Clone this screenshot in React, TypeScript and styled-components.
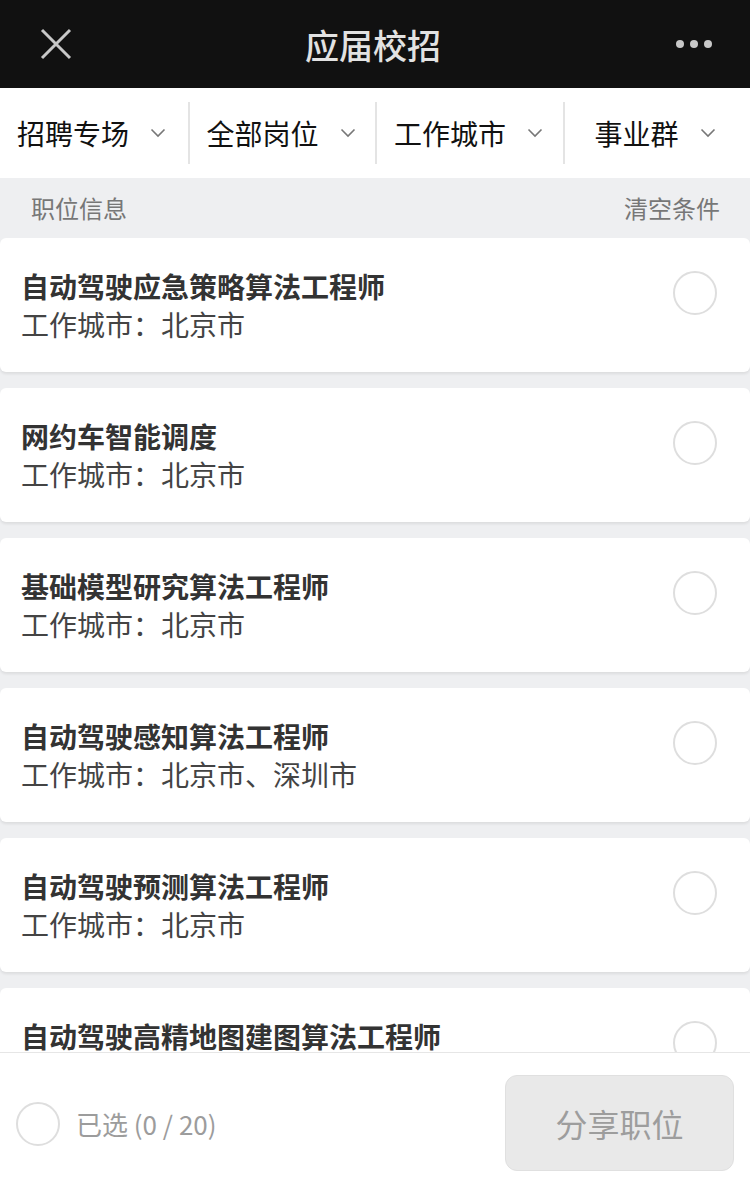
import styled, { createGlobalStyle } from "styled-components";

const GlobalStyle = createGlobalStyle`
  html, body {
    margin: 0;
    padding: 0;
    background: #eeeff1;
    font-family: "Noto Sans CJK SC", "Noto Sans", sans-serif;
  }
  * { box-sizing: border-box; }
`;

const Page = styled.div`
  height: 100vh;
  display: flex;
  flex-direction: column;
  overflow: hidden;
  background: #eeeff1;
`;

const NavBar = styled.div`
  height: 88px;
  flex-shrink: 0;
  background: #111111;
  display: flex;
  align-items: center;
  justify-content: space-between;
  padding: 0 36px 0 36px;

  .title {
    color: #e2e2e2;
    font-size: 34px;
    font-weight: 500;
    margin-right: 4px;
  }
`;

const IconBox = styled.div`
  width: 40px;
  height: 40px;
  display: flex;
  align-items: center;
  justify-content: center;
`;

const FilterBar = styled.div`
  height: 90px;
  flex-shrink: 0;
  background: #fff;
  display: grid;
  grid-template-columns: repeat(4, 1fr);
  align-items: center;
`;

const FilterItem = styled.div<{ $first?: boolean; $pad: number }>`
  height: 62px;
  display: flex;
  align-items: center;
  gap: 21px;
  padding-left: ${(p) => p.$pad}px;
  border-left: ${(p) => (p.$first ? "none" : "2px solid #e4e4e4")};
  font-size: 28px;
  color: #111;
`;

const SectionHead = styled.div`
  height: 60px;
  flex-shrink: 0;
  display: flex;
  align-items: center;
  justify-content: space-between;
  padding: 0 30px 2px 31px;
  font-size: 24px;
  color: #777;
`;

const List = styled.div`
  flex: 1;
  overflow: hidden;
  display: flex;
  flex-direction: column;
  gap: 16px;
`;

const Card = styled.div`
  flex-shrink: 0;
  background: #fff;
  border-radius: 6px;
  box-shadow: 0 2px 3px rgba(0, 0, 0, 0.08);
  padding: 29px 33px 29px 21px;
  display: flex;
  justify-content: space-between;
  align-items: flex-start;

  .name {
    font-size: 28px;
    line-height: 38px;
    font-weight: bold;
    color: #333;
  }
  .city {
    font-size: 28px;
    line-height: 38px;
    color: #444;
  }
`;

const Radio = styled.div`
  width: 44px;
  height: 44px;
  border-radius: 50%;
  border: 2px solid #dedede;
  background: #fff;
  flex-shrink: 0;
  margin-top: 4px;
`;

const BottomBar = styled.div`
  height: 142px;
  flex-shrink: 0;
  background: #fff;
  border-top: 1px solid #e6e6e6;
  display: flex;
  align-items: center;
  justify-content: space-between;
  padding: 0 16px;

  .picked {
    display: flex;
    align-items: center;
    gap: 16px;
    font-size: 26px;
    color: #9c9c9c;
  }
`;

const ShareButton = styled.div`
  width: 229px;
  height: 96px;
  border-radius: 12px;
  background: #e9e9e9;
  border: 1px solid #e0e0e0;
  color: #9d9d9d;
  font-size: 32px;
  display: flex;
  align-items: center;
  justify-content: center;
  margin-top: -2px;
`;

const Chevron = () => (
  <svg width="16" height="10" viewBox="0 0 16 10">
    <path d="M1.5 1.5 L8 8 L14.5 1.5" fill="none" stroke="#777" strokeWidth="1.6" />
  </svg>
);

const jobs = [
  { name: "自动驾驶应急策略算法工程师", city: "北京市" },
  { name: "网约车智能调度", city: "北京市" },
  { name: "基础模型研究算法工程师", city: "北京市" },
  { name: "自动驾驶感知算法工程师", city: "北京市、深圳市" },
  { name: "自动驾驶预测算法工程师", city: "北京市" },
  { name: "自动驾驶高精地图建图算法工程师", city: "北京市" },
];

const filters = [
  { label: "招聘专场", pad: 17 },
  { label: "全部岗位", pad: 17 },
  { label: "工作城市", pad: 17 },
  { label: "事业群", pad: 30 },
];

const App = () => {
  return (
    <Page>
      <GlobalStyle />
      <NavBar>
        <IconBox>
          <svg width="34" height="34" viewBox="0 0 34 34">
            <path d="M3 3 L31 31 M31 3 L3 31" stroke="#c8c8c8" strokeWidth="3" />
          </svg>
        </IconBox>
        <div className="title">应届校招</div>
        <IconBox>
          <svg width="38" height="10" viewBox="0 0 38 10">
            <circle cx="5" cy="5" r="4" fill="#c8c8c8" />
            <circle cx="19" cy="5" r="4" fill="#c8c8c8" />
            <circle cx="33" cy="5" r="4" fill="#c8c8c8" />
          </svg>
        </IconBox>
      </NavBar>
      <FilterBar>
        {filters.map((f, i) => (
          <FilterItem key={f.label} $first={i === 0} $pad={f.pad}>
            <span>{f.label}</span>
            <Chevron />
          </FilterItem>
        ))}
      </FilterBar>
      <SectionHead>
        <span>职位信息</span>
        <span>清空条件</span>
      </SectionHead>
      <List>
        {jobs.map((j) => (
          <Card key={j.name}>
            <div>
              <div className="name">{j.name}</div>
              <div className="city">工作城市：{j.city}</div>
            </div>
            <Radio />
          </Card>
        ))}
      </List>
      <BottomBar>
        <div className="picked">
          <Radio style={{ marginTop: 0 }} />
          <span>已选 (0 / 20)</span>
        </div>
        <ShareButton>分享职位</ShareButton>
      </BottomBar>
    </Page>
  );
};

export default App;
